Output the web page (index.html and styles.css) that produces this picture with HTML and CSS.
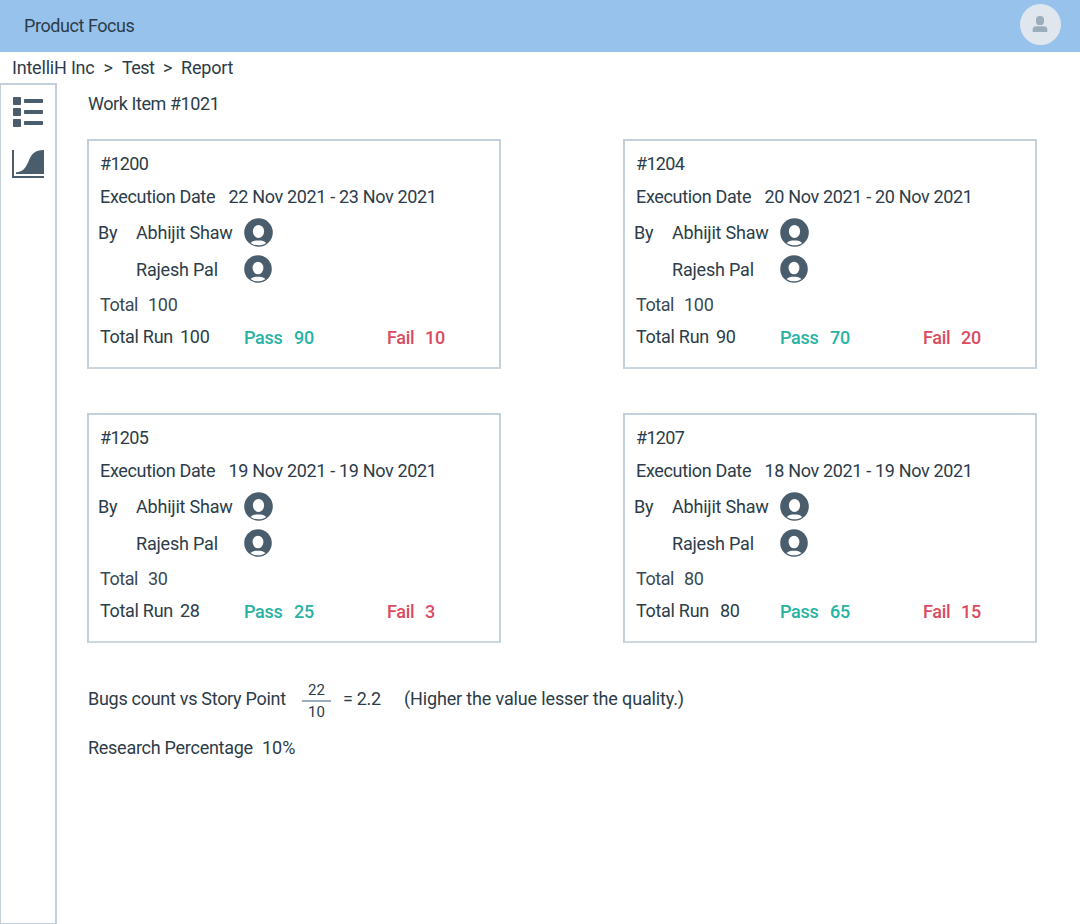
FILE: index.html
```html
<!DOCTYPE html>
<html lang="en">
<head>
<meta charset="utf-8">
<title>Product Focus</title>
<link rel="stylesheet" href="styles.css">
</head>
<body>
<svg class="defs" width="0" height="0" aria-hidden="true">
  <symbol id="user" viewBox="0 0 29 29">
    <circle cx="14.5" cy="14.5" r="14.3" fill="#4a5d6c"/>
    <ellipse cx="14.5" cy="13.4" rx="5.6" ry="6.5" fill="#fff"/>
    <path d="M6.800 24.900C8.600 23 11 22.500 14.500 22.500S20.400 23 22.200 24.900C20.200 26.500 17.500 27.300 14.500 27.300S8.800 26.500 6.800 24.900Z" fill="#fff"/>
  </symbol>
</svg>
<header class="topbar">
  <span class="brand">Product Focus</span>
  <svg class="avatar" viewBox="0 0 41 41"><circle cx="20.500" cy="20.500" r="20.500" fill="#dfe6ee"/><rect x="16" y="12" width="8" height="9" rx="3.600" fill="#9badba"/><path d="M12.700 28V25.500Q12.700 22.300 16.500 22.300H23.500Q27.300 22.300 27.300 25.500V28Z" fill="#9badba"/></svg>
</header>
<nav class="crumbs"><span class="c1">IntelliH Inc</span><span class="sep">&gt;</span><span class="c2">Test</span><span class="sep">&gt;</span><span class="c3">Report</span></nav>
<div class="body">
  <aside class="side">
    <svg class="list-icon" viewBox="0 0 30 30" fill="#4a5d6c"><rect width="8" height="8" rx=".7"/><rect y="11" width="8" height="8" rx=".7"/><rect y="22" width="8" height="8" rx=".7"/><rect x="11" y="2" width="19" height="4" rx=".8"/><rect x="11" y="13" width="19" height="4" rx=".8"/><rect x="11" y="24" width="19" height="4" rx=".8"/></svg>
    <svg class="chart-icon" viewBox="0 0 32 28" fill="#4a5d6c"><path d="M0 0H2V26H32V28H0Z"/><path d="M4 24V22.200C11 22 13.500 18 16.500 11.500C19.500 4 22.500 0 32 0V24Z"/></svg>
  </aside>
  <main class="main">
    <h1 class="title">Work Item #1021</h1>
    <section class="cards">
      <article class="card">
        <div class="row id">#1200</div>
        <div class="row date"><span class="label">Execution Date</span><span class="range">22 Nov 2021 - 23 Nov 2021</span></div>
        <div class="row person"><span class="by">By</span><span class="name">Abhijit Shaw</span><svg class="user"><use href="#user"/></svg></div>
        <div class="row person"><span class="by"></span><span class="name">Rajesh Pal</span><svg class="user small"><use href="#user"/></svg></div>
        <div class="row total"><span class="total-label">Total</span><span>100</span></div>
        <div class="row stats"><span class="run">Total Run</span><span class="num">100</span><span class="pass">Pass</span><span class="pass-n">90</span><span class="fail">Fail</span><span class="fail-n">10</span></div>
      </article>
      <article class="card">
        <div class="row id">#1204</div>
        <div class="row date"><span class="label">Execution Date</span><span class="range">20 Nov 2021 - 20 Nov 2021</span></div>
        <div class="row person"><span class="by">By</span><span class="name">Abhijit Shaw</span><svg class="user"><use href="#user"/></svg></div>
        <div class="row person"><span class="by"></span><span class="name">Rajesh Pal</span><svg class="user small"><use href="#user"/></svg></div>
        <div class="row total"><span class="total-label">Total</span><span>100</span></div>
        <div class="row stats"><span class="run">Total Run</span><span class="num">90</span><span class="pass">Pass</span><span class="pass-n">70</span><span class="fail">Fail</span><span class="fail-n">20</span></div>
      </article>
      <article class="card">
        <div class="row id">#1205</div>
        <div class="row date"><span class="label">Execution Date</span><span class="range">19 Nov 2021 - 19 Nov 2021</span></div>
        <div class="row person"><span class="by">By</span><span class="name">Abhijit Shaw</span><svg class="user"><use href="#user"/></svg></div>
        <div class="row person"><span class="by"></span><span class="name">Rajesh Pal</span><svg class="user small"><use href="#user"/></svg></div>
        <div class="row total"><span class="total-label">Total</span><span>30</span></div>
        <div class="row stats"><span class="run">Total Run</span><span class="num">28</span><span class="pass">Pass</span><span class="pass-n">25</span><span class="fail">Fail</span><span class="fail-n">3</span></div>
      </article>
      <article class="card">
        <div class="row id">#1207</div>
        <div class="row date"><span class="label">Execution Date</span><span class="range">18 Nov 2021 - 19 Nov 2021</span></div>
        <div class="row person"><span class="by">By</span><span class="name">Abhijit Shaw</span><svg class="user"><use href="#user"/></svg></div>
        <div class="row person"><span class="by"></span><span class="name">Rajesh Pal</span><svg class="user small"><use href="#user"/></svg></div>
        <div class="row total"><span class="total-label">Total</span><span>80</span></div>
        <div class="row stats wide"><span class="run">Total Run</span><span class="num">80</span><span class="pass">Pass</span><span class="pass-n">65</span><span class="fail">Fail</span><span class="fail-n">15</span></div>
      </article>
    </section>
    <div class="ratio"><span class="ratio-label">Bugs count vs Story Point</span><span class="fraction"><span class="top">22</span><span class="bottom">10</span></span><span class="result">= 2.2</span><span class="note">(Higher the value lesser the quality.)</span></div>
    <div class="research"><span class="research-label">Research Percentage</span><span class="pct">10%</span></div>
  </main>
</div>
</body>
</html>
```

FILE: styles.css
```css
* { box-sizing: border-box; }
body { margin: 0; height: 924px; display: flex; flex-direction: column; background: #fff; color: #2c3c49; font: 18px/24px Roboto, sans-serif; white-space: nowrap; overflow: hidden; }
.defs { position: absolute; }
.topbar { height: 52px; flex: none; background: #97c2ec; display: flex; justify-content: space-between; align-items: flex-start; padding: 4px 19px 0 24px; }
.brand { padding-top: 10px; letter-spacing: -.43px; }
.avatar { width: 41px; height: 41px; }
.crumbs { height: 31px; flex: none; display: grid; grid-template-columns: 91.500px 18.500px 41px 18px auto; align-items: center; padding-left: 12px; letter-spacing: -.2px; }
.c2 { letter-spacing: -.6px; }
.body { flex: 1; display: flex; min-height: 0; }
.side { width: 57px; border: solid #c3cfda; border-width: 2px 2px 1px 1px; display: flex; flex-direction: column; padding: 12px 0 0 11px; gap: 23px; }
.list-icon { width: 30px; height: 30px; margin-left: 1px; flex: none; }
.chart-icon { width: 32px; height: 28px; flex: none; }
.main { padding: 9px 0 0 30px; }
.title { margin: 0 0 23px 1px; font-size: 18px; font-weight: 400; line-height: 24px; letter-spacing: -.43px; }
.cards { display: grid; grid-template-columns: 414px 414px; column-gap: 122px; row-gap: 44.500px; }
.card { height: 229.500px; border: 2px solid #c3cfda; border-bottom-color: #cdd7e0; padding: 6px 0 0 11px; display: grid; grid-template-rows: 33px 34px 37px 37px 33px 34px; }
.row { display: grid; align-items: center; }
.id { letter-spacing: -.7px; }
.date { grid-template-columns: 128.500px auto; justify-content: start; letter-spacing: -.34px; }
.person { grid-template-columns: 38px 107.500px 29px; margin-left: -2px; justify-content: start; letter-spacing: -.2px; }
.user { width: 29px; height: 29px; }
.small { width: 28px; height: 28px; margin-bottom: 1px; }
.total { grid-template-columns: 48px auto; justify-content: start; letter-spacing: -.3px; color: #3a4956; }
.total-label { letter-spacing: -.45px; }
.stats { grid-template-columns: 80px 64px 50px 93px 38px 40px; letter-spacing: -.3px; }
.stats.wide { grid-template-columns: 84px 60px 50px 93px 38px 40px; }
.run, .num { padding-bottom: 2px; }
.pass, .pass-n { color: #26b3a4; font-weight: 500; }
.fail, .fail-n { color: #da4b62; font-weight: 500; }
.ratio { display: flex; align-items: center; height: 40px; margin: 37px 0 0 1px; }
.ratio-label { width: 214px; letter-spacing: -.29px; padding-bottom: 2px; }
.fraction { width: 29px; display: flex; flex-direction: column; text-align: center; font-size: 15px; line-height: 20px; padding: 1px 0 0 1px; margin: 2px 0 0 -1px; width: 30px; }
.top { border-bottom: 2px solid #9badba; }
.result { width: 61px; margin-left: 12px; letter-spacing: -.3px; padding-bottom: 2px; }
.note { letter-spacing: -.15px; padding-bottom: 2px; }
.research { display: grid; grid-template-columns: 174px auto; margin: 16px 0 0 1px; }
.research-label { letter-spacing: -.27px; }
```
